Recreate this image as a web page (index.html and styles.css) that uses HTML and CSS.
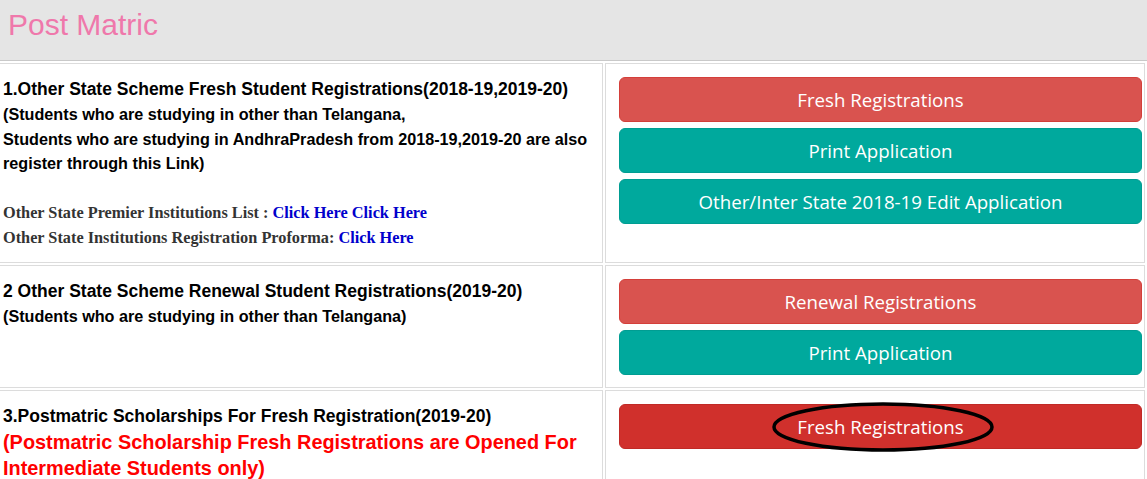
FILE: index.html
```html
<!DOCTYPE html>
<html>
<head>
<meta charset="utf-8">
<title>Post Matric</title>
<link rel="stylesheet" href="styles.css">
</head>
<body>
<div class="header"><h1 class="title">Post Matric</h1></div>
<table class="grid">
  <tr>
    <td class="info">
      <div class="head">1.Other State Scheme Fresh Student Registrations(2018-19,2019-20)</div>
      <div class="sub">(Students who are studying in other than Telangana,<br>Students who are studying in AndhraPradesh from 2018-19,2019-20 are also register through this Link)</div>
      <div class="links">
        <div>Other State Premier Institutions List : <a href="#">Click Here</a> <a href="#">Click Here</a></div>
        <div>Other State Institutions Registration Proforma: <a href="#">Click Here</a></div>
      </div>
    </td>
    <td class="actions">
      <a class="btn btn-red" href="#">Fresh Registrations</a>
      <a class="btn btn-teal" href="#">Print Application</a>
      <a class="btn btn-teal" href="#">Other/Inter State 2018-19 Edit Application</a>
    </td>
  </tr>
  <tr>
    <td class="info">
      <div class="head">2 Other State Scheme Renewal Student Registrations(2019-20)</div>
      <div class="sub">(Students who are studying in other than Telangana)</div>
    </td>
    <td class="actions">
      <a class="btn btn-red" href="#">Renewal Registrations</a>
      <a class="btn btn-teal" href="#">Print Application</a>
    </td>
  </tr>
  <tr>
    <td class="info">
      <div class="head">3.Postmatric Scholarships For Fresh Registration(2019-20)</div>
      <div class="alert">(Postmatric Scholarship Fresh Registrations are Opened For Intermediate Students only)</div>
    </td>
    <td class="actions">
      <a class="btn btn-dark-red circled" href="#">Fresh Registrations<svg class="ring" viewBox="0 0 224 52" width="224" height="52"><ellipse cx="112" cy="26" rx="109" ry="23" fill="none" stroke="#000" stroke-width="3.5"/></svg></a>
    </td>
  </tr>
</table>
</body>
</html>
```

FILE: styles.css
```css
html, body {
  margin: 0;
  padding: 0;
  background: #fff;
  overflow: hidden;
}
body {
  font-family: "Liberation Sans", Arial, sans-serif;
  color: #000;
}
.header {
  background: #e5e5e5;
  height: 60px;
  border-bottom: 1px solid #c9c9c9;
  padding-left: 8px;
}
.title {
  margin: 0;
  font-family: "Liberation Sans", Arial, sans-serif;
  font-weight: normal;
  font-size: 30px;
  line-height: 50px;
  color: #ef78ab;
}
.grid {
  border-collapse: separate;
  border-spacing: 2px;
  width: 1151px;
  margin-left: -4px;
  margin-top: 0;
}
.grid td {
  border: 1px solid #dcdcdc;
  vertical-align: top;
}
.info {
  width: 593px;
  padding: 13px 6px 12px 4px;
}
.head {
  font-weight: bold;
  font-size: 17.5px;
  line-height: 25px;
}
.sub {
  font-weight: bold;
  font-size: 16.2px;
  line-height: 24.5px;
}
.links {
  margin-top: 24px;
  font-family: "Liberation Serif", "Times New Roman", serif;
  font-weight: bold;
  font-size: 16.3px;
  line-height: 25px;
  color: #333;
}
.links a {
  color: #0000cc;
  text-decoration: none;
}
.alert {
  font-weight: bold;
  font-size: 19.9px;
  line-height: 26px;
  color: #ff0000;
}
.actions {
  padding: 13px 2px 12px 13px;
}
.btn {
  display: block;
  box-sizing: border-box;
  height: 45px;
  margin-bottom: 6px;
  border-radius: 6px;
  font-family: "Open Sans", sans-serif;
  font-size: 18.7px;
  line-height: 43px;
  text-align: center;
  color: #fff;
  text-decoration: none;
  border: 1px solid transparent;
}
.btn:last-child {
  margin-bottom: 0;
}
.btn-red {
  background: #d9534f;
  border-color: #d43f3a;
}
.btn-teal {
  background: #00a99d;
  border-color: #009d92;
}
.btn-dark-red {
  background: #d0302c;
  border-color: #c02a26;
}
.circled {
  position: relative;
}
.ring {
  position: absolute;
  left: 50%;
  top: 50%;
  margin-left: -110px;
  margin-top: -25px;
}
```
